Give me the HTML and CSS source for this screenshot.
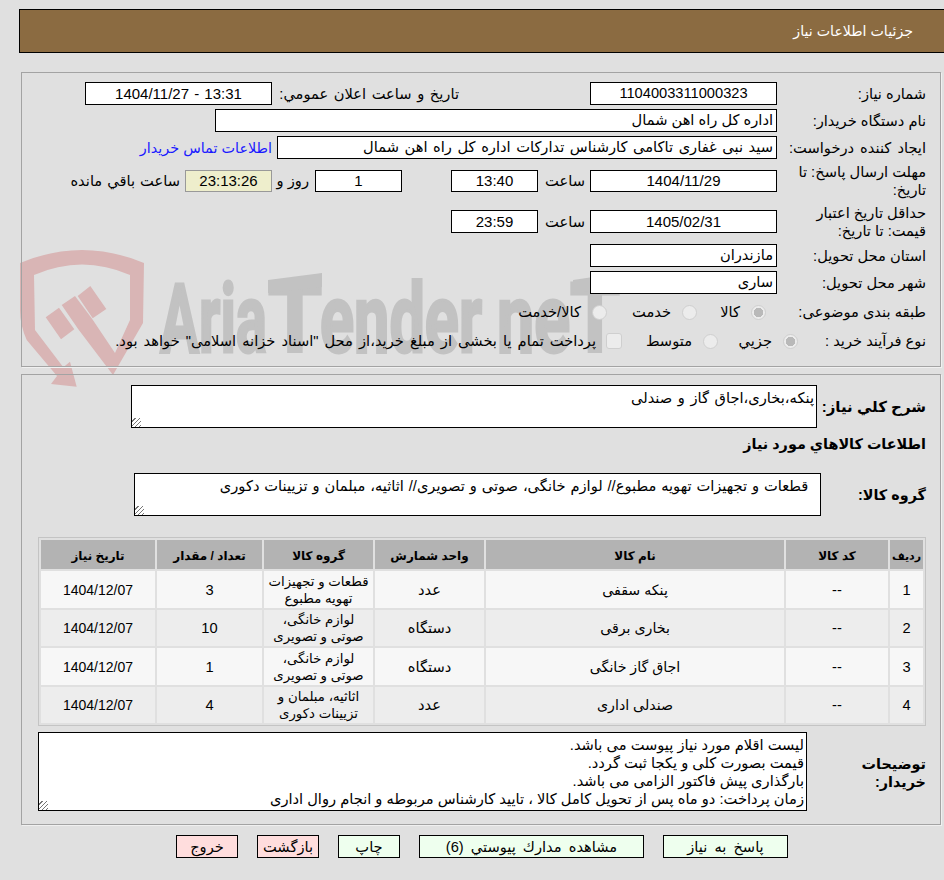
FILE: index.html
```html
<!DOCTYPE html>
<html lang="fa" dir="rtl">
<head>
<meta charset="utf-8">
<title>جزئیات اطلاعات نیاز</title>
<link rel="stylesheet" href="styles.css">
</head>
<body>
<svg class="watermark" width="944" height="400" viewBox="0 0 944 400" aria-hidden="true">
  <path class="wm-shield" fill-rule="evenodd" d="M20 263 Q82 237 144 263 L143 323 L113 375 L78.3 329.3 L61.7 305 L75 296 L91.7 318.3 L115 353 L130 320 L130 275 Q82 254 34 275 L35 330 L63.3 367.3 L70 361.7 L76.7 386.7 L51 384 L57 376 L26.7 340 Q20 325 20 310 Z"/>
  <path class="wm-shield" d="M45.7 317.3 L59 307.7 L74.3 329.3 L61 339.3 Z M77.7 296 L90.3 286 L106.3 309 L92.7 318.3 Z"/>
  <text class="wm-text" x="160" y="352" textLength="107" lengthAdjust="spacingAndGlyphs">Aria</text>
  <text class="wm-text" x="268" y="352" textLength="54" lengthAdjust="spacingAndGlyphs">T</text>
  <text class="wm-text" x="320" y="352" textLength="162" lengthAdjust="spacingAndGlyphs">ender</text>
  <text class="wm-text" x="497" y="352" textLength="73" lengthAdjust="spacingAndGlyphs">ne</text>
  <text class="wm-text" x="570" y="352" textLength="50" lengthAdjust="spacingAndGlyphs">T</text>
  <path class="wm-bar" d="M268 280 L322 273 L322 287 L268 293 Z M573 280 L620 273 L620 287 L573 293 Z"/>
</svg>

<header class="topbar">جزئیات اطلاعات نیاز</header>

<section class="panel panel-info">
  <div class="row">
    <div class="lbl">شماره نیاز:</div>
    <div class="field f-main center f-id">1104003311000323</div>
    <div class="lbl-second">تاریخ و ساعت اعلان عمومي:</div>
    <div class="field f-main center f-datetime" dir="ltr">1404/11/27 - 13:31</div>
  </div>
  <div class="row">
    <div class="lbl">نام دستگاه خریدار:</div>
    <div class="field f-buyer">اداره کل راه اهن شمال</div>
  </div>
  <div class="row">
    <div class="lbl lbl-wide">ایجاد کننده درخواست:</div>
    <div class="field f-creator">سید نبی غفاری تاکامی کارشناس تدارکات اداره کل راه اهن شمال</div>
    <a class="contact" href="#">اطلاعات تماس خریدار</a>
  </div>
  <div class="row row-tall">
    <div class="lbl">مهلت ارسال پاسخ: تا تاریخ:</div>
    <div class="field f-main f-short center">1404/11/29</div>
    <div class="lbl-time">ساعت</div>
    <div class="field f-time f-short center">13:40</div>
    <div class="field f-time f-short center f-days">1</div>
    <div class="lbl-day">روز و</div>
    <div class="field f-time f-short center f-timer">23:13:26</div>
    <div class="lbl-left">ساعت باقي مانده</div>
  </div>
  <div class="row row-tall row-validity">
    <div class="lbl">حداقل تاریخ اعتبار قیمت: تا تاریخ:</div>
    <div class="field f-main center">1405/02/31</div>
    <div class="lbl-time">ساعت</div>
    <div class="field f-time center">23:59</div>
  </div>
  <div class="row">
    <div class="lbl">استان محل تحویل:</div>
    <div class="field f-main">مازندران</div>
  </div>
  <div class="row">
    <div class="lbl">شهر محل تحویل:</div>
    <div class="field f-main">ساری</div>
  </div>
  <div class="row row-cat">
    <div class="lbl lbl-cat">طبقه بندی موضوعی:</div>
    <label class="opt opt-kala"><input class="radio" type="radio" name="cat" checked disabled>کالا</label>
    <label class="opt opt-service"><input class="radio" type="radio" name="cat" disabled>خدمت</label>
    <label class="opt"><input class="radio" type="radio" name="cat" disabled>کالا/خدمت</label>
  </div>
  <div class="row row-proc">
    <div class="lbl lbl-proc">نوع فرآیند خرید :</div>
    <label class="opt opt-small"><input class="radio" type="radio" name="proc" checked disabled>جزیي</label>
    <label class="opt opt-mid"><input class="radio" type="radio" name="proc" disabled>متوسط</label>
    <label class="opt opt-long"><input class="check" type="checkbox" disabled>پرداخت تمام یا بخشی از مبلغ خرید،از محل "اسناد خزانه اسلامی" خواهد بود.</label>
  </div>
</section>

<section class="panel panel-goods">
  <div class="row-text">
    <div class="lbl-bold lbl-desc">شرح كلي نیاز:</div>
    <textarea class="ta ta-desc" readonly>پنکه،بخاری،اجاق گاز و صندلی</textarea>
  </div>
  <h2 class="section-title">اطلاعات کالاهاي مورد نياز</h2>
  <div class="row-text row-group">
    <div class="lbl-bold lbl-group">گروه کالا:</div>
    <textarea class="ta ta-group" readonly>  قطعات و تجهیزات تهویه مطبوع// لوازم خانگی، صوتی و تصویری// اثاثیه، مبلمان و تزیینات دکوری</textarea>
  </div>
  <table class="goods">
    <colgroup>
      <col class="c-row"><col class="c-code"><col class="c-name"><col class="c-unit"><col class="c-group"><col class="c-qty"><col class="c-date">
    </colgroup>
    <thead>
      <tr><th class="th-row">ردیف</th><th>کد کالا</th><th>نام کالا</th><th>واحد شمارش</th><th>گروه کالا</th><th>تعداد / مقدار</th><th>تاریخ نیاز</th></tr>
    </thead>
    <tbody>
      <tr><td>1</td><td>--</td><td class="td-name">پنکه سقفی</td><td>عدد</td><td class="td-group">قطعات و تجهیزات تهویه مطبوع</td><td>3</td><td class="td-date">1404/12/07</td></tr>
      <tr><td>2</td><td>--</td><td class="td-name">بخاری برقی</td><td>دستگاه</td><td class="td-group">لوازم خانگی، صوتی و تصویری</td><td>10</td><td class="td-date">1404/12/07</td></tr>
      <tr><td>3</td><td>--</td><td class="td-name">اجاق گاز خانگی</td><td>دستگاه</td><td class="td-group">لوازم خانگی، صوتی و تصویری</td><td>1</td><td class="td-date">1404/12/07</td></tr>
      <tr><td>4</td><td>--</td><td class="td-name">صندلی اداری</td><td>عدد</td><td class="td-group">اثاثیه، مبلمان و تزیینات دکوری</td><td>4</td><td class="td-date">1404/12/07</td></tr>
    </tbody>
  </table>
  <div class="row-text row-notes">
    <div class="lbl-bold lbl-notes">توضیحات خریدار:</div>
    <textarea class="ta ta-notes" readonly>لیست اقلام مورد نیاز پیوست می باشد.
قیمت بصورت کلی و یکجا ثبت گردد.
بارگذاری پیش فاکتور الزامی می باشد.
زمان پرداخت: دو ماه پس از تحویل کامل کالا ، تایید کارشناس مربوطه و انجام روال اداری</textarea>
  </div>
</section>

<div class="actions">
  <button class="btn btn-go b-answer" type="button">پاسخ به نیاز</button>
  <button class="btn btn-go b-docs" type="button">مشاهده مدارك پیوستي (6)</button>
  <button class="btn btn-go b-small" type="button">چاپ</button>
  <button class="btn btn-stop b-small" type="button">بازگشت</button>
  <button class="btn btn-stop b-small" type="button">خروج</button>
</div>
</body>
</html>
```
FILE: styles.css
```css
* { box-sizing: border-box; }
html, body { margin: 0; height: 880px; overflow: hidden; }
body {
  background: #e0e0e0;
  color: #000;
  font-family: "Liberation Sans", "DejaVu Sans", sans-serif;
  font-size: 14.67px;
  line-height: 18px;
  padding-top: 9px;
}

.watermark { position: absolute; left: 0; top: 0; z-index: -1; direction: ltr; }
.wm-shield { fill: #d9b5b5; }
.wm-text {
  fill: #c2c2c2;
  stroke: #c2c2c2;
  stroke-width: 3px;
  font-family: "Roboto", "Liberation Sans", sans-serif;
  font-weight: 700;
  font-size: 96px;
}
.wm-bar { fill: #c2c2c2; }

.topbar {
  height: 44px;
  margin-left: 19px;
  padding-right: 31px;
  background: #8b6b41;
  border: 1px solid #000;
  border-right: 0;
  color: #fff;
  font-size: 14.2px;
  display: flex;
  align-items: center;
}

.panel {
  width: 920px;
  margin-right: 3px;
  border: 1px solid #a3a3a3;
  box-shadow: 1px 1px 0 #f0f0f0;
  padding-right: 14px;
}
.panel-info { height: 295px; margin-top: 19px; padding-top: 9px; }
.panel-goods { height: 451px; margin-top: 7px; padding-top: 10px; }

.row { display: flex; align-items: center; min-height: 23px; margin-bottom: 4px; }
.row-tall { min-height: 36px; margin-bottom: 4px; }
.row-validity { min-height: 37px; }
.row-cat { min-height: 22px; margin-top: 7px; margin-bottom: 7px; }
.row-proc { min-height: 22px; }

.lbl { width: 149px; flex: none; padding-left: 8px; }
.lbl-wide { word-spacing: 2px; padding-left: 0; }
.lbl-second { width: 187px; margin-right: 131px; flex: none; word-spacing: 1.5px; }
.lbl-time { width: 52px; padding-right: 5px; flex: none; }
.lbl-day { width: 43px; padding-right: 6px; flex: none; }
.lbl-left { padding-right: 5px; flex: none; white-space: nowrap; word-spacing: 1px; }
.lbl-cat { width: 160px; }
.lbl-proc { width: 128px; }

.field {
  height: 23px;
  background: #fff;
  border: 1px solid #000;
  padding: 0 3px;
  line-height: 21px;
  white-space: nowrap;
  overflow: hidden;
  flex: none;
}
.f-short { height: 22px; line-height: 20px; }
.center { text-align: center; font-size: 15px; }
.f-id { font-size: 14.67px; }
.f-datetime { word-spacing: 1px; }
.f-main { width: 187px; }
.f-buyer { width: 562px; }
.f-creator { width: 500px; word-spacing: 1.5px; }
.f-time { width: 87px; }
.f-days { margin-right: 49px; }
.f-timer { background: #eeeecc; border-color: #999; }
.contact { margin-right: 5px; color: #1a1aff; font-size: 14.4px; text-decoration: none; white-space: nowrap; }

.opt { display: flex; align-items: center; flex: none; white-space: nowrap; }
.opt-kala { width: 69px; }
.opt-service { width: 90px; }
.opt-small { width: 80px; }
.opt-mid { width: 96px; }
.opt-long { word-spacing: 2px; }

.radio, .check {
  appearance: none;
  margin: 0 0 0 11px;
  flex: none;
  background: #ececec;
  border: 1px solid #cfcfcf;
}
.radio { width: 15px; height: 15px; border-radius: 50%; }
.radio:checked { background: radial-gradient(circle, #b9b9b9 0 4.5px, #ececec 5px); }
.check { width: 16px; height: 16px; border-radius: 3px; margin-left: 10px; }

.row-text { display: flex; align-items: center; }
.lbl-bold { font-weight: 700; flex: none; font-size: 14.4px; }
.lbl-desc { width: 109px; font-size: 15px; }
.lbl-group { width: 105px; }
.lbl-notes { width: 119px; padding-left: 40px; padding-top: 3px; }
.section-title { margin: 7px 0 0; font-size: 14.4px; line-height: 18px; font-weight: 700; }
.row-group { margin-top: 20px; }
.row-notes { margin-top: 6px; }

.ta {
  display: block;
  flex: none;
  background: #fff;
  border: 1px solid #000;
  border-radius: 0;
  padding: 3px 2px 2px;
  margin: 0;
  outline: 0;
  overflow: hidden;
  color: #000;
  font: inherit;
  line-height: 18px;
}
.ta::-webkit-resizer {
  background: repeating-linear-gradient(135deg, transparent 0 2px, #777 2px 3px) no-repeat left bottom / 9px 9px;
}
.ta-desc { width: 686px; height: 43px; word-spacing: 1.5px; }
.ta-group { width: 687px; height: 43px; word-spacing: 0.8px; }
.ta-notes { width: 769px; height: 79px; }

.goods {
  width: 888px;
  height: 189px;
  margin-top: 21px;
  table-layout: fixed;
  border: 1px solid #c4c4c4;
  border-spacing: 2px;
  text-align: center;
}
.c-row { width: 33px; }
.c-code { width: 102px; }
.c-name { width: 298px; }
.c-unit { width: 109px; }
.c-group { width: 109px; }
.c-qty { width: 105px; }
.c-date { width: 114px; }
.goods th { height: 29px; padding: 2px 0 0; background: #b3b3b3; font-size: 12px; font-weight: 700; }
.goods .th-row { font-size: 11px; }
.goods td { height: 36px; padding: 2px 0 0; line-height: 17px; }
.goods tbody tr:nth-child(odd) td { background: #f7f7f7; }
.goods tbody tr:nth-child(even) td { background: #ededed; }
.goods td.td-name { font-size: 14.2px; }
.goods td.td-group { font-size: 13.3px; padding: 1px 3px 0; }
.goods td.td-date { font-size: 14px; }

.actions { display: flex; gap: 19px; margin-top: 10px; padding-right: 156px; }
.btn {
  height: 23px;
  padding: 0;
  border: 1px solid #000;
  border-radius: 0;
  color: #000;
  font: inherit;
  white-space: nowrap;
}
.btn-go { background: #eeffee; }
.btn-stop { background: #ffdddd; }
.b-answer { width: 125px; word-spacing: 3px; }
.b-docs { width: 225px; word-spacing: 3px; }
.b-small { width: 62px; }
```
